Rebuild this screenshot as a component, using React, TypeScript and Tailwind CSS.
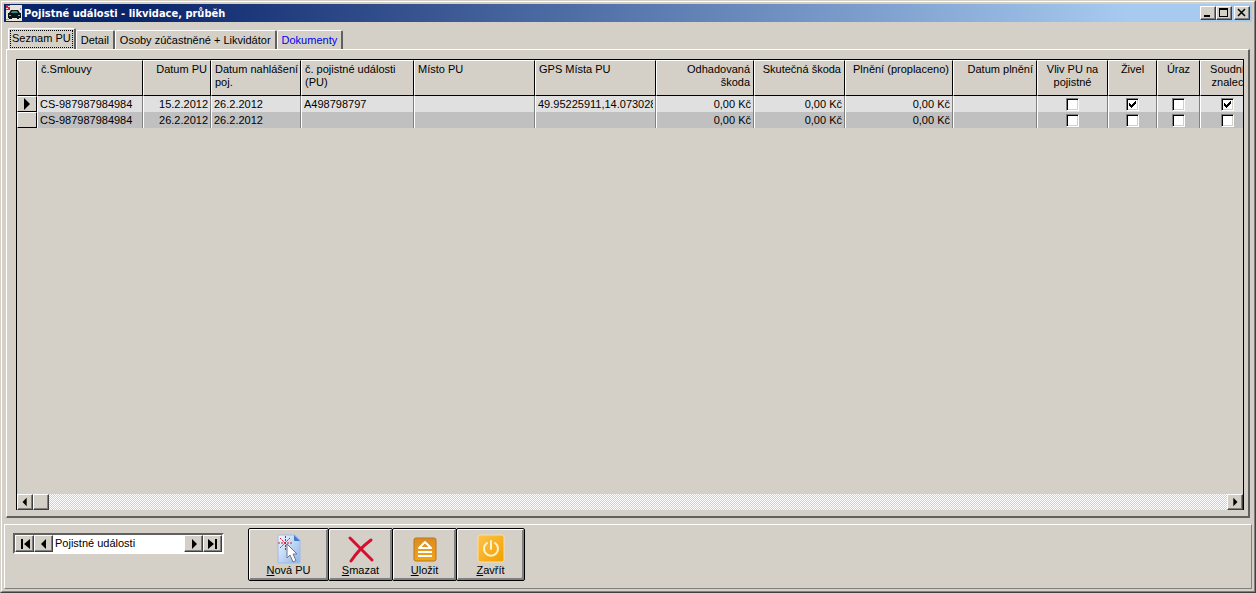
import { useState, type ReactNode } from "react";
import clsx from "clsx";

const tabs = ["Seznam PU", "Detail", "Osoby zúčastněné + Likvidátor", "Dokumenty"];

const columns = [
  { label: "č.Smlouvy", width: 106, align: "left" },
  { label: "Datum PU", width: 68, align: "right" },
  { label: "Datum nahlášení\npoj.", width: 90, align: "left" },
  { label: "č. pojistné události\n(PU)", width: 113, align: "left" },
  { label: "Místo PU", width: 121, align: "left" },
  { label: "GPS Místa PU", width: 121, align: "left" },
  { label: "Odhadovaná\nškoda", width: 98, align: "right" },
  { label: "Skutečná škoda", width: 91, align: "right" },
  { label: "Plnění (proplaceno)", width: 108, align: "right" },
  { label: "Datum plnění", width: 84, align: "right" },
  { label: "Vliv PU na\npojistné", width: 71, align: "center" },
  { label: "Živel", width: 49, align: "center" },
  { label: "Úraz", width: 43, align: "center" },
  { label: "Soudní\nznalec", width: 55, align: "center" },
];

const initialRows: (string | boolean)[][] = [
  ["CS-987987984984", "15.2.2012", "26.2.2012", "A498798797", "", "49.95225911,14.0730281", "0,00 Kč", "0,00 Kč", "0,00 Kč", "", false, true, false, true],
  ["CS-987987984984", "26.2.2012", "26.2.2012", "", "", "", "0,00 Kč", "0,00 Kč", "0,00 Kč", "", false, false, false, false],
];

const raised =
  "border border-t-white border-l-white border-r-[#404040] border-b-[#404040] bg-[#d4d0c8] shadow-[inset_-1px_-1px_0_#808080]";

const Arrow = ({ dir, bar, small }: { dir: "left" | "right"; bar?: boolean; small?: boolean }) => (
  <svg
    viewBox="0 0 14 12"
    className={clsx(small ? "h-2.5 w-3" : "h-3 w-3.5", dir === "left" && "-scale-x-100")}
    aria-hidden="true"
  >
    <path d={bar ? "M2 1L8 6L2 11Z M9 1H11V11H9Z" : "M5 1L10 6L5 11Z"} fill="#000" />
  </svg>
);

const CheckBox = ({ checked, label, onChange }: { checked: boolean; label: string; onChange: () => void }) => (
  <span className="mx-auto grid h-[13px] w-[13px]">
    <input
      type="checkbox"
      checked={checked}
      onChange={onChange}
      aria-label={label}
      className="col-start-1 row-start-1 h-[13px] w-[13px] appearance-none border border-t-[#808080] border-l-[#808080] border-r-white border-b-white bg-white shadow-[inset_1px_1px_0_#000,inset_-1px_-1px_0_#d4d0c8]"
    />
    {checked && (
      <svg viewBox="0 0 13 13" className="pointer-events-none col-start-1 row-start-1 h-[13px] w-[13px]" aria-hidden="true">
        <path d="M3 5L5 7L10 2V5L5 10L3 8Z" fill="#000" shapeRendering="crispEdges" />
      </svg>
    )}
  </span>
);

const AppIcon = () => (
  <svg viewBox="0 0 16 16" className="h-4 w-4" aria-hidden="true">
    <rect width="16" height="16" fill="#e8e4dc" />
    <path d="M0 0H4V1H2V2H4V5H0V4H2V3H0Z" fill="#e02030" />
    <path d="M5 5H12L14 8H15V13H13V14H11V13H6V14H3V13H2V8H3Z" fill="#0a1414" />
    <path d="M6 6H11L12 8H5Z" fill="#2d8a86" />
    <path d="M3 10H5V11H3ZM12 10H14V11H12Z" fill="#3fc4b8" />
    <path d="M0 14H3V15H0ZM14 3H15V5H14Z" fill="#9a9a9a" />
  </svg>
);

const NewIcon = () => (
  <svg viewBox="0 0 28 30" className="h-[30px] w-7" aria-hidden="true">
    <defs>
      <linearGradient id="page" x1="0" y1="0" x2="1" y2="1">
        <stop offset="0" stopColor="#f4f8fe" />
        <stop offset="1" stopColor="#8db5ea" />
      </linearGradient>
    </defs>
    <path d="M4 1H20L25 6V28Q25 29 24 29H4Q3 29 3 28V2Q3 1 4 1Z" fill="url(#page)" stroke="#9dbce6" />
    <path d="M19 1L25 7H20Q19 7 19 6Z" fill="#3f79c8" />
    <g stroke="#d81830" strokeDasharray="2 1">
      <path d="M10.500 2V16M3 9H18M5 4L15 14M15 4L5 14" />
    </g>
    <path d="M12 10V24L15 21L18 28L21 26.500L18 20H22Z" fill="#fff" stroke="#6d7688" />
  </svg>
);

const DeleteIcon = () => (
  <svg viewBox="0 0 28 30" className="h-[30px] w-7" aria-hidden="true">
    <path d="M3 4Q12 13 25 26M24 6Q12 15 4 27" fill="none" stroke="#d40f32" strokeWidth="3" strokeLinecap="round" />
  </svg>
);

const SaveIcon = () => (
  <svg viewBox="0 0 28 30" className="h-[30px] w-7" aria-hidden="true">
    <defs>
      <linearGradient id="saveBg" x1="0" y1="0" x2="0" y2="1">
        <stop offset="0" stopColor="#d98d22" />
        <stop offset="1" stopColor="#f5a414" />
      </linearGradient>
    </defs>
    <rect x="3" y="4" width="22" height="23" rx="2" fill="url(#saveBg)" stroke="#b9761c" />
    <path d="M14 8L20 14H8Z" fill="none" stroke="#fff" strokeWidth="2" strokeLinejoin="round" />
    <path d="M7 18H21M7 22H21" stroke="#fff" strokeWidth="2" />
  </svg>
);

const CloseIcon = () => (
  <svg viewBox="0 0 28 30" className="h-[30px] w-7" aria-hidden="true">
    <defs>
      <linearGradient id="closeBg" x1="0" y1="0" x2="1" y2="1">
        <stop offset="0" stopColor="#ffc24a" />
        <stop offset="1" stopColor="#f0a000" />
      </linearGradient>
    </defs>
    <rect x="1" y="1" width="26" height="27" rx="2" fill="url(#closeBg)" stroke="#fbe0a0" />
    <path d="M10 9A7 7 0 1 0 18 9M14 7V15" fill="none" stroke="#fff3d0" strokeWidth="2" strokeLinecap="round" />
  </svg>
);

const WindowButton = ({ label, className, children }: { label: string; className?: string; children: ReactNode }) => (
  <button type="button" aria-label={label} className={clsx("flex h-3.5 w-4 items-center justify-center", raised, className)}>
    <svg viewBox="0 0 10 10" className="h-2.5 w-2.5" fill="none" stroke="#000" shapeRendering="crispEdges" aria-hidden="true">
      {children}
    </svg>
  </button>
);

const NavButton = ({ label, children }: { label: string; children: ReactNode }) => (
  <button type="button" aria-label={label} className={clsx("flex w-[19px] shrink-0 items-center justify-center", raised)}>
    {children}
  </button>
);

const actions = [
  { label: "Nová PU", width: "w-[81px]", icon: <NewIcon /> },
  { label: "Smazat", width: "w-[65px]", icon: <DeleteIcon /> },
  { label: "Uložit", width: "w-[65px]", icon: <SaveIcon /> },
  { label: "Zavřít", width: "w-[69px]", icon: <CloseIcon /> },
];

const App = () => {
  const [activeTab, setActiveTab] = useState(0);
  const [rows, setRows] = useState(initialRows);
  const [current, setCurrent] = useState("Pojistné události");

  const toggle = (row: number, col: number) => {
    setRows(prev => prev.map((r, i) => (i === row ? r.map((v, j) => (j === col ? !v : v)) : r)));
  };

  return (
    <div className="flex min-h-screen flex-col border border-t-[#d4d0c8] border-l-[#d4d0c8] border-r-[#404040] border-b-[#404040] bg-[#d4d0c8] font-['Liberation_Sans',sans-serif] text-[11px] leading-[13px] text-black">
      <div className="flex flex-1 flex-col border border-t-white border-l-white border-r-[#808080] border-b-[#808080] p-0.5">

        {/* Title bar */}
        <header className="flex h-[18px] shrink-0 items-center bg-linear-to-r/srgb from-[#0a246a] from-10% to-[#a6caf0] to-90% px-0.5">
          <AppIcon />
          <h1 className="ml-0.5 flex-1 truncate font-['DejaVu_Sans_Condensed','DejaVu_Sans',sans-serif] text-[11px] font-bold text-white">
            Pojistné události - likvidace, průběh
          </h1>
          <WindowButton label="Minimalizovat">
            <path d="M1 8H7" strokeWidth="2" />
          </WindowButton>
          <WindowButton label="Maximalizovat">
            <path d="M0 1H9" strokeWidth="2" />
            <path d="M0.500 1V8.500H8.500V1" />
          </WindowButton>
          <WindowButton label="Zavřít okno" className="ml-0.5">
            <path d="M1 1L8 8M8 1L1 8" strokeWidth="1.500" shapeRendering="auto" />
          </WindowButton>
        </header>

        {/* Tabs */}
        <div role="tablist" className="mx-0.5 mt-1.5 flex h-[21px] shrink-0 items-end pl-0.5">
          {tabs.map((tab, i) => (
            <button
              key={tab}
              type="button"
              role="tab"
              aria-selected={i === activeTab}
              onClick={() => setActiveTab(i)}
              className={clsx(
                "rounded-t-xs border-t border-r-2 border-l border-t-white border-r-[#606060] border-l-white whitespace-nowrap",
                i === activeTab ? "h-[21px] px-px" : "h-[19px] px-1",
                tab === "Dokumenty" && "text-[#0000f0]"
              )}
            >
              <span className={clsx("block", i === activeTab && "border border-dotted border-black px-px pt-px pb-0.5")}>{tab}</span>
            </button>
          ))}
        </div>

        {/* Grid */}
        <main className="mx-0.5 flex flex-1 flex-col border-t border-r-2 border-b-2 border-l border-t-white border-r-[#606060] border-b-[#606060] border-l-white pt-[9px] pr-1 pb-1.5 pl-[9px]">
          <div className="flex min-w-0 flex-1 flex-col overflow-hidden border border-b-0 border-black">
            <div className="flex-1 overflow-hidden">
              <table className="w-[1238px] table-fixed border-separate border-spacing-0">
                <colgroup>
                  <col style={{ width: 20 }} />
                  {columns.map(c => (
                    <col key={c.label} style={{ width: c.width }} />
                  ))}
                </colgroup>
                <thead>
                  <tr className="h-9">
                    <td className="border border-t-white border-r-black border-b-black border-l-white" />
                    {columns.map(c => (
                      <th
                        key={c.label}
                        scope="col"
                        className={clsx(
                          "border border-t-white border-r-black border-b-black border-l-white px-[3px] pt-0.5 align-top font-normal whitespace-pre",
                          c.align === "left" && "text-left",
                          c.align === "right" && "text-right",
                          c.align === "center" && "text-center"
                        )}
                      >
                        {c.label}
                      </th>
                    ))}
                  </tr>
                </thead>
                <tbody>
                  {rows.map((row, r) => (
                    <tr key={r} className={clsx("h-4", r % 2 === 0 ? "bg-[#e0e0e0]" : "bg-[#c0c0c0]")}>
                      <td className="border border-t-white border-r-black border-b-black border-l-white bg-[#d4d0c8] p-0">
                        {r === 0 && (
                          <svg viewBox="0 0 18 12" className="block h-3 w-[18px]" aria-hidden="true">
                            <path d="M6 0L12 6L6 12Z" fill="#000" />
                          </svg>
                        )}
                      </td>
                      {row.map((value, c) => (
                        <td
                          key={c}
                          className={clsx(
                            "border-r border-l border-r-[#808080] border-l-white px-0.5 py-0 whitespace-nowrap",
                            columns[c].align === "right" && "text-right"
                          )}
                        >
                          {typeof value === "boolean" ? (
                            <CheckBox checked={value} label={`${columns[c].label.replace("\n", " ")}, řádek ${r + 1}`} onChange={() => toggle(r, c)} />
                          ) : (
                            <div className="overflow-hidden">{value}</div>
                          )}
                        </td>
                      ))}
                    </tr>
                  ))}
                </tbody>
              </table>
            </div>

            {/* Horizontal scrollbar */}
            <div className="flex h-4 shrink-0 bg-[repeating-conic-gradient(#fff_0_25%,#d4d0c8_0_50%)] bg-size-[2px_2px]">
              <button type="button" aria-label="Posunout vlevo" className={clsx("flex w-4 items-center justify-center", raised)}>
                <Arrow dir="left" small />
              </button>
              <div className={clsx("w-4", raised)} />
              <button type="button" aria-label="Posunout vpravo" className={clsx("ml-auto flex w-4 items-center justify-center", raised)}>
                <Arrow dir="right" small />
              </button>
            </div>
          </div>
        </main>

        {/* Footer */}
        <footer className="mt-1.5 flex h-[65px] shrink-0 items-start border border-t-white border-r-[#808080] border-b-[#808080] border-l-white pt-[3px] pl-2">
          <div className="mt-[5px] flex h-[21px] w-[211px] border-2 border-t-[#606060] border-r-white border-b-white border-l-[#606060]">
            <NavButton label="První">
              <Arrow dir="left" bar />
            </NavButton>
            <NavButton label="Předchozí">
              <Arrow dir="left" />
            </NavButton>
            <input
              type="text"
              aria-label="Záznam"
              value={current}
              onChange={e => setCurrent(e.target.value)}
              className="min-w-0 flex-1 bg-white px-0.5 outline-none"
            />
            <NavButton label="Další">
              <Arrow dir="right" />
            </NavButton>
            <NavButton label="Poslední">
              <Arrow dir="right" bar />
            </NavButton>
          </div>

          <div className="ml-6 flex pl-px">
            {actions.map(a => (
              <button
                key={a.label}
                type="button"
                className={clsx(
                  "-ml-px flex h-[53px] flex-col items-center rounded-xs border border-black pt-[5px] shadow-[inset_1px_1px_0_#fff,inset_-2px_-2px_0_#808080]",
                  a.width
                )}
              >
                {a.icon}
                <span>
                  <span className="underline">{a.label[0]}</span>
                  {a.label.slice(1)}
                </span>
              </button>
            ))}
          </div>
        </footer>
      </div>
    </div>
  );
};

export default App;
